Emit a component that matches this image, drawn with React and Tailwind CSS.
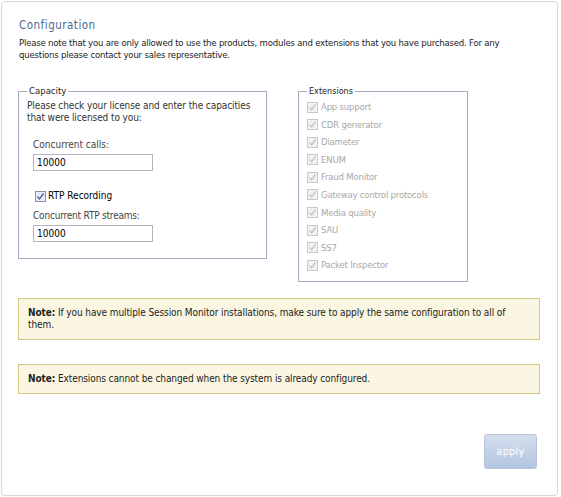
import React from "react";

const font = { fontFamily: '"DejaVu Sans Condensed", "Liberation Sans Narrow", "Liberation Sans", sans-serif' };

function Check({ disabled }) {
  return (
    <span
      className={
        "inline-flex shrink-0 items-center justify-center w-[11px] h-[11px] border " +
        (disabled ? "border-[#c8c8c8] bg-[#f2f2f2]" : "border-[#8f8fa8] bg-[#e8ecf4]")
      }
    >
      <svg width="9" height="9" viewBox="0 0 9 9">
        <path
          d="M1.5 4.5 L3.5 7 L7.5 1.5"
          fill="none"
          stroke={disabled ? "#c4c4cc" : "#4a5fa0"}
          strokeWidth="1.3"
        />
      </svg>
    </span>
  );
}

const extensions = [
  "App support",
  "CDR generator",
  "Diameter",
  "ENUM",
  "Fraud Monitor",
  "Gateway control protocols",
  "Media quality",
  "SAU",
  "SS7",
  "Packet Inspector",
];

export default function App() {
  return (
    <div className="bg-white w-[561px] h-[497px] pt-[1px] pl-[1px]" style={font}>
      <div className="w-[557px] h-[495px] border border-[#d6d6d6] rounded-[4px] flex flex-col pl-[16px] pr-[18px]">
        <div className="mt-[15px] pl-[1px] text-[11.5px] leading-[16px] tracking-[0.5px] text-[#4b6890] whitespace-nowrap">Configuration</div>
        <div className="mt-[4px] pl-[1px] text-[9.5px] leading-[12px] tracking-[-0.2px] text-[#222] whitespace-nowrap">
          Please note that you are only allowed to use the products, modules and extensions that you have purchased. For any
          <br />
          questions please contact your sales representative.
        </div>

        <div className="mt-[24px] flex items-start gap-[31px]">
          <fieldset className="w-[249px] h-[174px] border border-[#a9a9bd] pl-[8px] pr-[6px]">
            <legend className="px-[2px] text-[9.5px] leading-[12px] text-[#222]">Capacity</legend>
            <div className="mt-[3px] text-[10px] leading-[12px] tracking-[-0.1px] text-[#333] whitespace-nowrap">
              Please check your license and enter the capacities
              <br />
              that were licensed to you:
            </div>
            <div className="pl-[6px]">
              <div className="mt-[15px] text-[10px] leading-[12px] text-[#444]">Concurrent calls:</div>
              <div className="mt-[3px] w-[120px] h-[17px] border border-[#b4b4c0] bg-white flex items-center pl-[3px] text-[10px] text-black">
                10000
              </div>
              <div className="mt-[19px] flex items-center gap-[2px] pl-[2px] text-[10px] leading-[12px] text-black">
                <Check />
                <span>RTP Recording</span>
              </div>
              <div className="mt-[8px] text-[10px] leading-[12px] tracking-[-0.2px] text-[#444]">Concurrent RTP streams:</div>
              <div className="mt-[3px] w-[120px] h-[17px] border border-[#b4b4c0] bg-white flex items-center pl-[3px] text-[10px] text-black">
                10000
              </div>
            </div>
          </fieldset>

          <fieldset className="w-[170px] h-[197px] border border-[#a9a9bd] pl-[8px]">
            <legend className="px-[2px] text-[9px] leading-[12px] text-[#222]">Extensions</legend>
            <div className="flex flex-col gap-[5.6px] mt-[4px]">
              {extensions.map((e) => (
                <div key={e} className="flex items-center gap-[3px] text-[9.5px] leading-[12px] tracking-[-0.2px] text-[#a8a8a8] whitespace-nowrap">
                  <Check disabled />
                  <span>{e}</span>
                </div>
              ))}
            </div>
          </fieldset>
        </div>

        <div className="mt-[16px] w-[522px] h-[42px] border border-[#cfca86] bg-[#fbf6e1] pl-[9px] pt-[8px] text-[10px] leading-[12px] tracking-[-0.1px] text-[#222] whitespace-nowrap">
          <b>Note:</b> If you have multiple Session Monitor installations, make sure to apply the same configuration to all of
          <br />
          them.
        </div>
        <div className="mt-[24px] w-[522px] h-[30px] border border-[#cfca86] bg-[#fbf6e1] pl-[9px] flex items-center text-[10px] leading-[12px] tracking-[-0.1px] text-[#222] whitespace-nowrap">
          <span>
            <b>Note:</b> Extensions cannot be changed when the system is already configured.
          </span>
        </div>

        <div className="mt-[40px] flex justify-end pr-[2px]">
          <div className="w-[53px] h-[35px] rounded-[3px] border border-[#b6c4dc] bg-gradient-to-b from-[#d5deed] to-[#b3c5e0] flex items-center justify-center text-[10.5px] text-white tracking-[0.4px]">
            apply
          </div>
        </div>
      </div>
    </div>
  );
}
